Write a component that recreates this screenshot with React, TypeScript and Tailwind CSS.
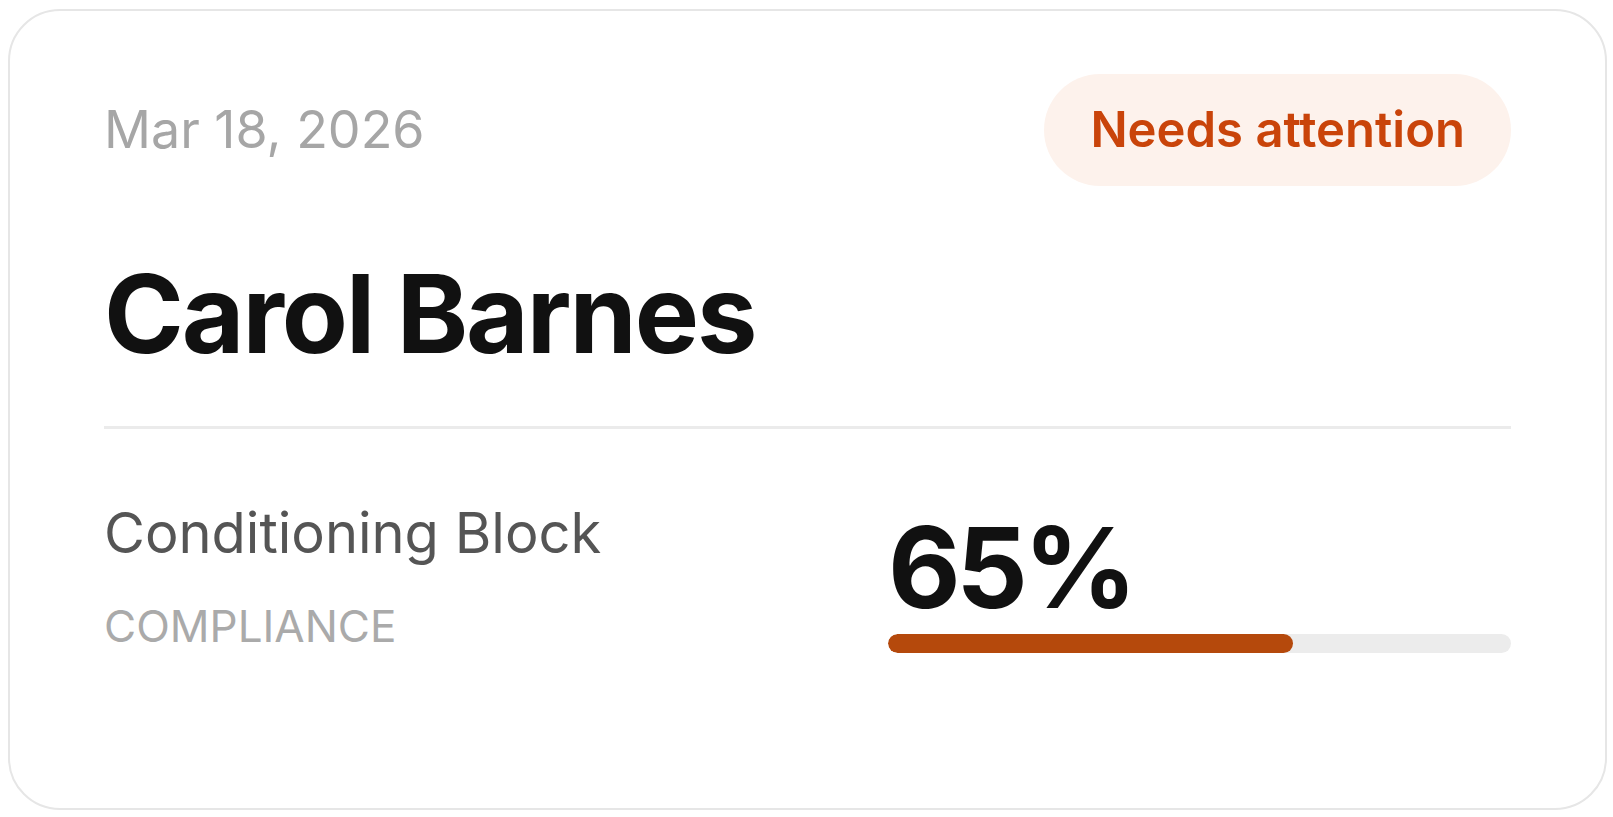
const record = {
  date: "Mar 18, 2026",
  status: "Needs attention",
  name: "Carol Barnes",
  program: "Conditioning Block",
  compliance: 65,
};

export default function App() {
  return (
    <div className="min-h-screen bg-white pl-[8px] pt-[9px] font-['Inter',sans-serif]">
      <div className="h-[801px] w-[1599px] rounded-[52px] border-2 border-[#e6e6e6] bg-white px-[94px] pt-[63px]">
        {/* header */}
        <div className="flex items-center justify-between">
          <span className="text-[52px] leading-[1.2] text-[#a6a6a6]">
            {record.date}
          </span>
          <span className="flex h-[112px] items-center rounded-full bg-[#fdf2ec] px-[46px] text-[49px] font-semibold text-[#c9440a]">
            {record.status}
          </span>
        </div>

        <h1 className="mt-[74px] text-[108px] font-bold leading-none tracking-[-0.019em] text-[#111]">
          {record.name}
        </h1>

        <div className="mt-[58px] h-[3px] bg-[#ebebeb]" />

        <div className="mt-[71px] flex items-end justify-between">
          <div className="flex flex-col">
            <span className="text-[56px] leading-[1.2] text-[#555]">
              {record.program}
            </span>
            <span className="mt-[33px] text-[44px] leading-[1.2] text-[#aaa]">
              COMPLIANCE
            </span>
          </div>

          <div className="flex w-[623px] flex-col">
            <span className="text-[112px] font-bold leading-none tracking-[-0.04em] text-[#111]">
              {record.compliance}%
            </span>
            <div className="mt-[11px] h-[19px] w-full overflow-hidden rounded-full bg-[#ececec]">
              <div
                className="h-full rounded-full bg-[#b5490c]"
                style={{ width: `${record.compliance}%` }}
              />
            </div>
          </div>
        </div>
      </div>
    </div>
  );
}
